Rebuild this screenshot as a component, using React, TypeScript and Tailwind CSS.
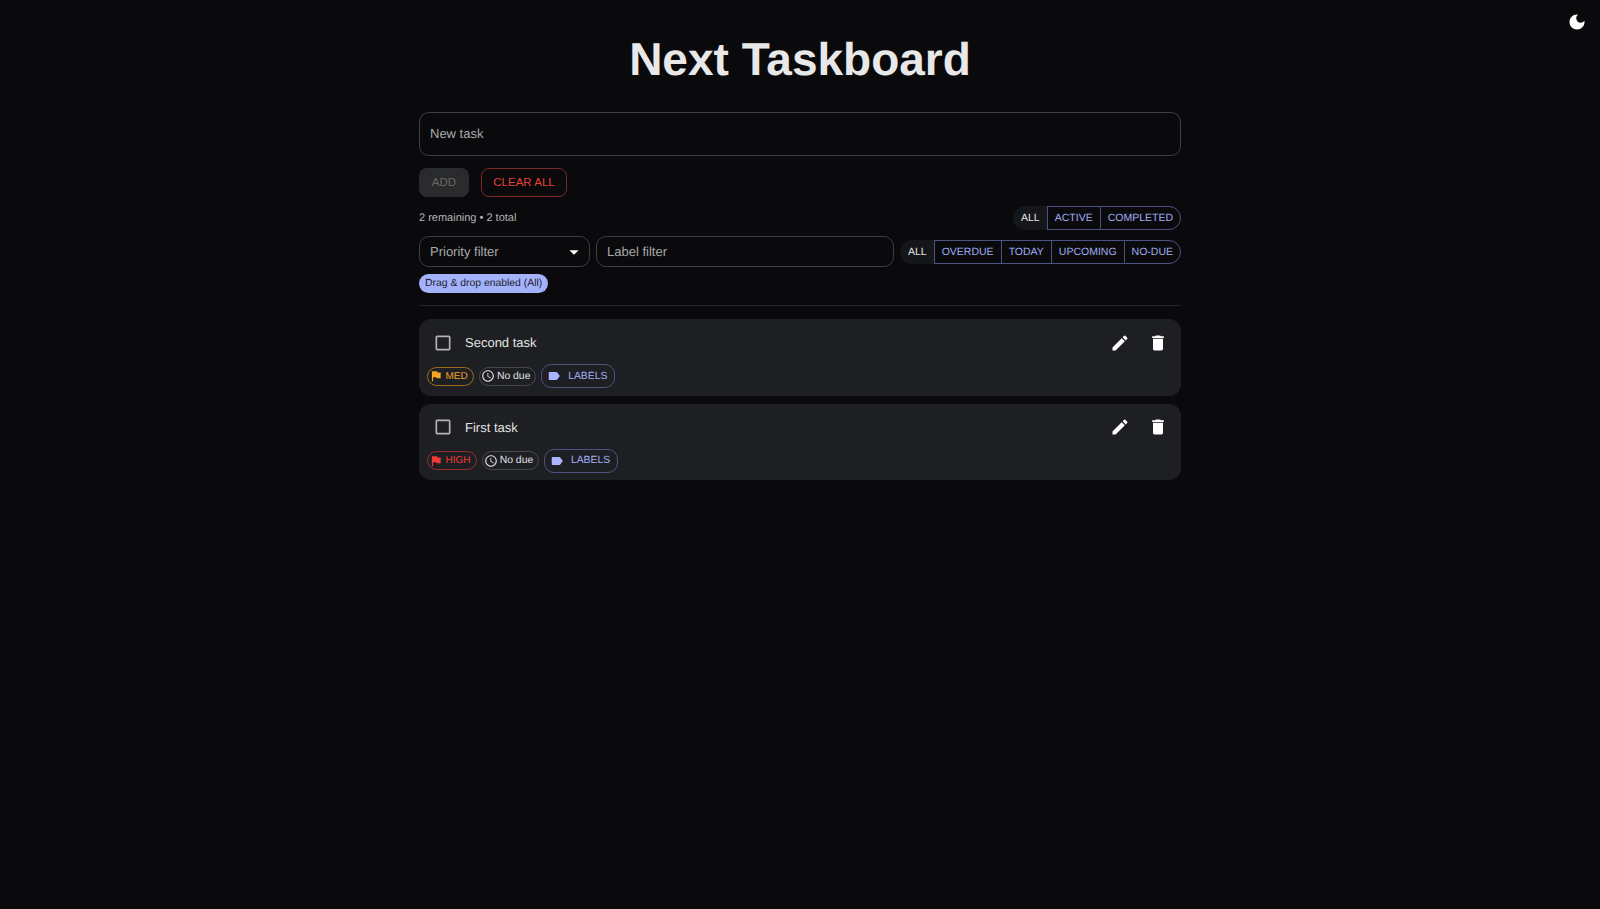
import React from 'react'

const paths = {
  edit: 'M3 17.25V21h3.75L17.81 9.94l-3.75-3.75zM20.71 7.04c.39-.39.39-1.02 0-1.41l-2.34-2.34a.9959.9959 0 0 0-1.41 0l-1.83 1.83 3.75 3.75z',
  trash: 'M6 19c0 1.1.9 2 2 2h8c1.1 0 2-.9 2-2V7H6zM19 4h-3.5l-1-1h-5l-1 1H5v2h14z',
  flag: 'M14.4 6 14 4H5v17h2v-7h5.6l.4 2h7V6z',
  label: 'M17.63 5.84C17.27 5.33 16.67 5 16 5L5 5.01C3.9 5.01 3 5.9 3 7v10c0 1.1.9 1.99 2 1.99L16 19c.67 0 1.27-.33 1.63-.84L22 12z',
  clock: 'M11.99 2C6.47 2 2 6.48 2 12s4.47 10 9.99 10C17.52 22 22 17.52 22 12S17.52 2 11.99 2M12 20c-4.42 0-8-3.58-8-8s3.58-8 8-8 8 3.58 8 8-3.58 8-8 8m.5-13H11v6l5.25 3.15.75-1.23-4.5-2.67z',
  moon: 'M12 3c-4.97 0-9 4.03-9 9s4.03 9 9 9 9-4.03 9-9c0-.46-.04-.92-.1-1.36-.98 1.37-2.58 2.26-4.4 2.26-2.98 0-5.4-2.42-5.4-5.4 0-1.81.89-3.42 2.26-4.4-.44-.06-.9-.1-1.36-.1z',
  box: 'M19 5v14H5V5h14m0-2H5c-1.1 0-2 .9-2 2v14c0 1.1.9 2 2 2h14c1.1 0 2-.9 2-2V5c0-1.1-.9-2-2-2z',
  drop: 'M7 10l5 5 5-5z',
}

function Icon({ d, className }: { d: string; className: string }) {
  return (
    <svg viewBox="0 0 24 24" fill="currentColor" className={className}>
      <path d={d} />
    </svg>
  )
}

function Toggle({ items }: { items: string[] }) {
  return (
    <div className="flex h-6 whitespace-nowrap text-[10.5px] leading-none">
      {items.map((item, i) => {
        if (i === 0) {
          return (
            <div key={item} className="flex items-center rounded-l-[12px] bg-[#15161a] pl-[8px] pr-[7px] pt-[1px] text-[#e4e4e6]">
              {item}
            </div>
          )
        }
        return (
          <div
            key={item}
            className={`flex items-center border-y border-l border-[#4c5382] px-[7px] pt-[1px] text-[#a3aef2] ${
              i === items.length - 1 ? 'rounded-r-[12px] border-r' : ''
            }`}
          >
            {item}
          </div>
        )
      })}
    </div>
  )
}

function TaskCard({ title, priority, flagText, flagBorder }: { title: string; priority: string; flagText: string; flagBorder: string }) {
  return (
    <div className="h-[76.7px] rounded-[12px] bg-[#1e1f23] pl-2 pr-[13px]">
      <div className="flex h-[45px] items-center pt-[2.6px]">
        <Icon d={paths.box} className="ml-[6px] h-5 w-5 text-[#b3b3b5]" />
        <span className="ml-[12px] text-[13px] text-[#e3e3e5]">{title}</span>
        <Icon d={paths.edit} className="ml-auto h-5 w-5 text-white" />
        <Icon d={paths.trash} className="ml-[18px] h-5 w-5 text-white" />
      </div>
      <div className="-ml-[0.5px] flex items-center gap-[4.7px]">
        <div className={`flex h-[19px] items-center rounded-full border pl-[1.5px] pr-[5.5px] text-[10px] ${flagText} ${flagBorder}`}>
          <Icon d={paths.flag} className="mr-[2.5px] h-[14px] w-[14px]" />
          {priority}
        </div>
        <div className="flex h-[19px] items-center rounded-full border border-[#48494c] pl-[1px] pr-[5px] text-[10.4px] text-[#e0e0e2]">
          <Icon d={paths.clock} className="mr-[2px] h-[14px] w-[14px]" />
          <span className="pt-[1px]">No due</span>
        </div>
        <div className="flex h-[24px] items-center rounded-[10px] border border-[#4c5382] pl-[5px] pr-[7px] text-[10.4px] text-[#a3aef2]">
          <Icon d={paths.label} className="mr-[7px] h-[14px] w-[14px] text-[#aab5ff]" />
          <span className="pt-[1px]">LABELS</span>
        </div>
      </div>
    </div>
  )
}

export default function App() {
  return (
    <div className="relative min-h-screen bg-[#0a0a0d] font-['Liberation_Sans',Arial,sans-serif] [text-rendering:geometricPrecision]">
      <button className="absolute right-[13px] top-[12px] text-white">
        <Icon d={paths.moon} className="h-5 w-5" />
      </button>

      <main className="mx-auto w-[762px] pt-[31px]">
        <h1 className="h-[56px] text-center text-[46px] font-bold leading-[56px] text-[#e8e8e8]">Next Taskboard</h1>

        <div className="mt-[25px] flex h-[44px] items-center rounded-[10px] border border-[#3d3e41] px-[10px] text-[13px] text-[#a9a9ab]">
          New task
        </div>

        <div className="mt-[12px] flex gap-3">
          <button className="h-[29px] w-[50px] rounded-[8px] bg-[#2a2b2d] text-[11.5px] text-[#68686a]">ADD</button>
          <button className="h-[29px] w-[86px] rounded-[8px] border border-[#7a2a26] text-[11.5px] text-[#e5403a]">CLEAR ALL</button>
        </div>

        <div className="mt-[9px] flex items-center justify-between">
          <span className="text-[11px] text-[#b4b4b6]">2 remaining • 2 total</span>
          <Toggle items={['ALL', 'ACTIVE', 'COMPLETED']} />
        </div>

        <div className="mt-[6px] flex items-center">
          <div className="flex h-[31px] w-[171px] items-center justify-between rounded-[10px] border border-[#3d3e41] pl-[10px] pr-[4px] text-[13px] text-[#a9a9ab]">
            <span className="pt-[1px]">Priority filter</span>
            <Icon d={paths.drop} className="h-[22px] w-[22px] text-white" />
          </div>
          <div className="ml-[6px] flex h-[31px] w-[298px] items-center rounded-[10px] border border-[#3d3e41] px-[10px] text-[13px] text-[#a9a9ab]">
            <span className="pt-[1px]">Label filter</span>
          </div>
          <div className="ml-auto">
            <Toggle items={['ALL', 'OVERDUE', 'TODAY', 'UPCOMING', 'NO-DUE']} />
          </div>
        </div>

        <div className="mt-[7px] flex">
          <span className="flex h-[19px] items-center rounded-full bg-[#a4b2fb] px-[6px] pt-[1px] text-[10.4px] text-[#1b1d2c]">Drag &amp; drop enabled (All)</span>
        </div>

        <hr className="mt-[12px] border-t border-[#242528]" />

        <div className="mt-[13px] flex flex-col gap-2">
          <TaskCard title="Second task" priority="MED" flagText="text-[#f5a524]" flagBorder="border-[#a06c1c]" />
          <TaskCard title="First task" priority="HIGH" flagText="text-[#ee3b36]" flagBorder="border-[#94302c]" />
        </div>
      </main>
    </div>
  )
}
